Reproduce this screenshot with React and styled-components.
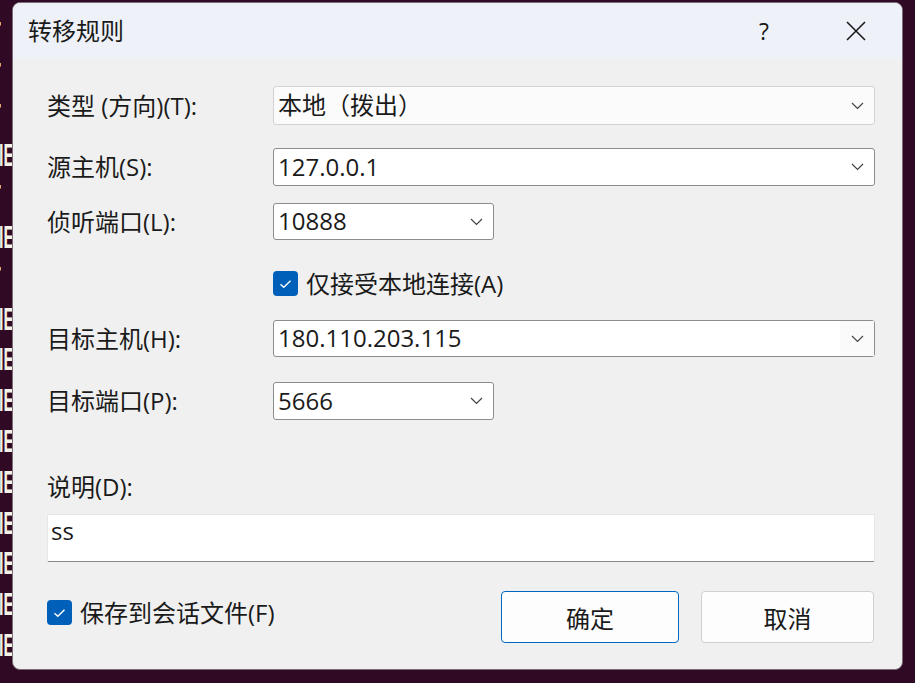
import React from 'react';
import styled, { createGlobalStyle } from 'styled-components';

const GlobalStyle = createGlobalStyle`
    html, body {
        margin: 0;
        padding: 0;
        width: 100%;
        height: 100%;
        background: #300a24;
        overflow: hidden;
    }
    #root {
        height: 100%;
    }
`;

const UI_FONT = `"Open Sans", "Noto Sans CJK SC", sans-serif`;

// Terminal behind the dialog (only a sliver shows on the left)
const Terminal = styled.div`
    position: relative;
    height: 100%;
    background: #300a24;
    padding-top: 13px;
    box-sizing: border-box;
`;

const TermLine = styled.div`
    height: 40.8px;
    line-height: 40.8px;
    font-family: "Liberation Sans", sans-serif;
    font-weight: bold;
    font-size: 32px;
    color: #f4f2e6;
    white-space: pre;
    transform: scaleX(0.5);
    transform-origin: 0 0;
    margin-left: ${(p) => p.$shift}px;
`;

// Dialog window
const Dialog = styled.div`
    position: absolute;
    left: 12px;
    top: 2px;
    width: 891px;
    height: 668px;
    box-sizing: border-box;
    border: 1px solid #7c6c77;
    border-radius: 8px;
    overflow: hidden;
    background: #f0f0f0;
    display: flex;
    flex-direction: column;
    font-family: ${UI_FONT};
    color: #1a1a1a;
`;

const TitleBar = styled.div`
    height: 56px;
    flex-shrink: 0;
    display: flex;
    align-items: center;
    background: #eef2f8;
    padding-left: 15px;
`;

const Title = styled.div`
    flex: 1;
    font-size: 24px;
    line-height: 1.2;
`;

const CaptionButton = styled.div`
    width: 92px;
    height: 56px;
    display: flex;
    align-items: center;
    justify-content: center;
    font-size: 23px;
`;

const Body = styled.div`
    flex: 1;
    display: flex;
    flex-direction: column;
    padding: 27px 27px 0 34px;
`;

const Row = styled.div`
    display: grid;
    grid-template-columns: 226px 1fr;
    align-items: center;
    margin-top: ${(p) => p.$mt || 0}px;
`;

const Label = styled.div`
    font-size: 24px;
    line-height: 28px;
    white-space: nowrap;
`;

const Combo = styled.div`
    display: flex;
    align-items: stretch;
    box-sizing: border-box;
    width: ${(p) => (p.$narrow ? '221px' : '100%')};
    height: ${(p) => p.$h || 38}px;
    background: ${(p) => (p.$soft ? '#fbfbfb' : '#ffffff')};
    border: 1px solid ${(p) => (p.$soft ? '#d2d2d2' : '#8c8c8c')};
    border-radius: 3px;
`;

const ComboValue = styled.div`
    flex: 1;
    display: flex;
    align-items: center;
    padding-left: 4px;
    font-size: 24px;
    line-height: 1.2;
    white-space: nowrap;
`;

const ComboArrow = styled.div`
    width: 34px;
    display: flex;
    align-items: center;
    justify-content: center;
    background: ${(p) => p.$bg || 'transparent'};
`;

const CheckRow = styled.div`
    display: flex;
    align-items: center;
    gap: 8px;
    height: 25px;
    align-self: ${(p) => (p.$top ? 'flex-start' : 'auto')};
    margin-top: ${(p) => p.$top || 0}px;
`;

const CheckBox = styled.div`
    width: 25px;
    height: 25px;
    border-radius: 4px;
    background: #005fb8;
    display: flex;
    align-items: center;
    justify-content: center;
    flex-shrink: 0;
`;

const CheckText = styled.span`
    font-size: 24px;
    line-height: 25px;
    white-space: nowrap;
`;

const NoteLabel = styled(Label)`
    margin-top: 53px;
`;

const NoteBox = styled.div`
    margin-top: 13px;
    height: 48px;
    box-sizing: border-box;
    background: #ffffff;
    border: 1px solid #e6e6e6;
    border-bottom: 1px solid #868686;
    border-radius: 2px;
    padding: 2px 3px;
    font-size: 24px;
    line-height: 1.2;
`;

const Footer = styled.div`
    margin-top: 29px;
    display: flex;
    align-items: center;
    justify-content: space-between;
    padding-right: 1px;
`;

const ButtonGroup = styled.div`
    display: flex;
    gap: 22px;
`;

const Button = styled.button`
    width: ${(p) => p.$w}px;
    height: 52px;
    box-sizing: border-box;
    background: #fdfdfd;
    border: 1px solid ${(p) => (p.$primary ? '#0067c0' : '#d0d0d0')};
    border-radius: 4px;
    font-family: ${UI_FONT};
    font-size: 24px;
    color: #1a1a1a;
    padding: 0;
    cursor: pointer;
`;

const Chevron = () => (
    <svg width="13" height="8" viewBox="0 0 13 8">
        <path d="M1 1 L6.5 6.5 L12 1" fill="none" stroke="#444" strokeWidth="1.2" />
    </svg>
);

const Tick = () => (
    <svg width="13" height="10" viewBox="0 0 13 10">
        <path d="M1.5 5.2 L4.8 8.3 L11.5 1.7" fill="none" stroke="#fff" strokeWidth="1.4" />
    </svg>
);

const CloseIcon = () => (
    <svg width="20" height="20" viewBox="0 0 20 20">
        <path d="M1 1 L19 19 M19 1 L1 19" stroke="#1a1a1a" strokeWidth="1.6" />
    </svg>
);

const termLines = ['T', 'T', 'T', 'IE', 'T', 'IE', 'T', 'IE', 'IE', 'IE', 'IE', 'IE', 'IE', 'IE', 'IE', 'IE'];

const ComboField = ({ value, narrow, soft, h, arrowBg }) => (
    <Combo $narrow={narrow} $soft={soft} $h={h}>
        <ComboValue>{value}</ComboValue>
        <ComboArrow $bg={arrowBg}>
            <Chevron />
        </ComboArrow>
    </Combo>
);

const App = () => {
    return (
        <>
            <GlobalStyle />
            <Terminal>
                {termLines.map((t, i) => (
                    <TermLine key={i} $shift={t === 'T' ? -9 : -1}>
                        {t}
                    </TermLine>
                ))}
                <Dialog>
                    <TitleBar>
                        <Title>转移规则</Title>
                        <CaptionButton>?</CaptionButton>
                        <CaptionButton>
                            <CloseIcon />
                        </CaptionButton>
                    </TitleBar>
                    <Body>
                        <Row>
                            <Label>类型 (方向)(T):</Label>
                            <ComboField value="本地（拨出）" soft h={39} />
                        </Row>
                        <Row $mt={23}>
                            <Label>源主机(S):</Label>
                            <ComboField value="127.0.0.1" />
                        </Row>
                        <Row $mt={17}>
                            <Label>侦听端口(L):</Label>
                            <ComboField value="10888" narrow h={37} />
                        </Row>
                        <Row $mt={31}>
                            <span />
                            <CheckRow>
                                <CheckBox>
                                    <Tick />
                                </CheckBox>
                                <CheckText>仅接受本地连接(A)</CheckText>
                            </CheckRow>
                        </Row>
                        <Row $mt={24}>
                            <Label>目标主机(H):</Label>
                            <ComboField value="180.110.203.115" h={37} arrowBg="#fafafa" />
                        </Row>
                        <Row $mt={25}>
                            <Label>目标端口(P):</Label>
                            <ComboField value="5666" narrow />
                        </Row>
                        <NoteLabel>说明(D):</NoteLabel>
                        <NoteBox>ss</NoteBox>
                        <Footer>
                            <CheckRow $top={9}>
                                <CheckBox>
                                    <Tick />
                                </CheckBox>
                                <CheckText>保存到会话文件(F)</CheckText>
                            </CheckRow>
                            <ButtonGroup>
                                <Button $primary $w={178}>确定</Button>
                                <Button $w={173}>取消</Button>
                            </ButtonGroup>
                        </Footer>
                    </Body>
                </Dialog>
            </Terminal>
        </>
    );
};

export default App;
